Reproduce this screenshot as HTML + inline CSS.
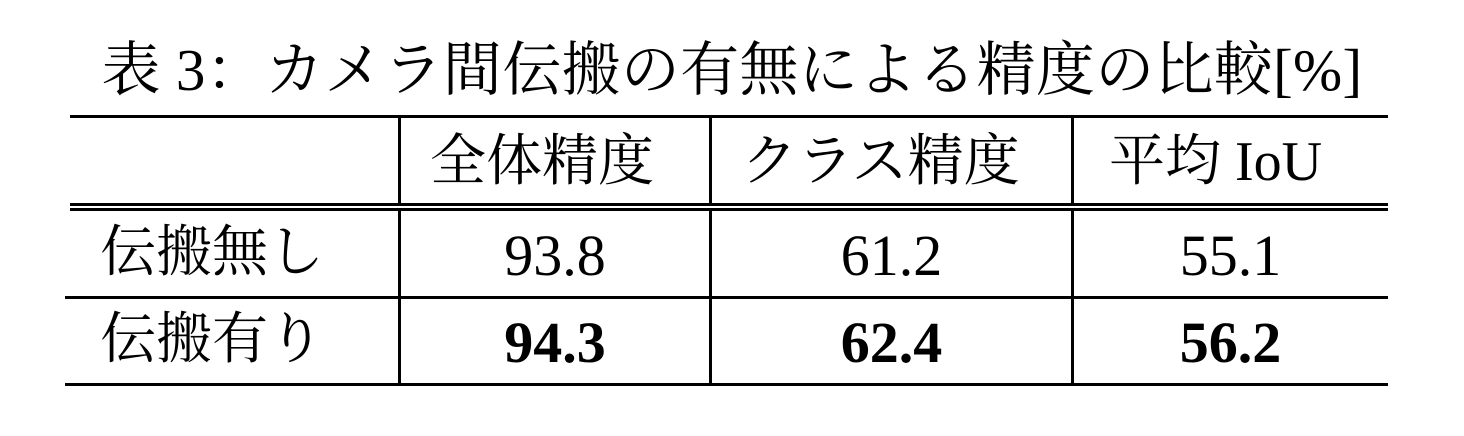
<!DOCTYPE html>
<html><head><meta charset="utf-8"><style>
body{margin:0;width:1464px;height:436px;background:#fff;position:relative;overflow:hidden;font-family:"Liberation Serif","Noto Serif CJK SC","Noto Serif CJK JP",serif;color:#000}
.h{position:absolute;background:#000;height:3px}
.v{position:absolute;background:#000;width:3px}
.t{position:absolute;font-size:56px;line-height:60px;white-space:nowrap;text-align:center}
b{font-weight:bold}
</style></head><body>
<div class="t" style="left:0;width:1464px;top:40px;font-size:59px;letter-spacing:0.3px">表 3：カメラ間伝搬の有無による精度の比較[%]</div>
<div class="h" style="left:70px;width:1318px;top:115px"></div>
<div class="h" style="left:70px;width:1318px;top:203px"></div>
<div class="h" style="left:70px;width:1318px;top:208px"></div>
<div class="h" style="left:65px;width:1323px;top:296px"></div>
<div class="h" style="left:65px;width:1323px;top:383px"></div>
<div class="v" style="left:398px;top:116px;height:89px"></div>
<div class="v" style="left:398px;top:209px;height:176px"></div>
<div class="v" style="left:709px;top:116px;height:89px"></div>
<div class="v" style="left:709px;top:209px;height:176px"></div>
<div class="v" style="left:1071px;top:116px;height:89px"></div>
<div class="v" style="left:1071px;top:209px;height:176px"></div>
<div class="t" style="left:387px;width:310px;top:132px">全体精度</div>
<div class="t" style="left:700px;width:361px;top:132px">クラス精度</div>
<div class="t" style="left:1058px;width:315px;top:132px">平均 IoU</div>
<div class="t" style="left:100px;top:223px;text-align:left">伝搬無し</div>
<div class="t" style="left:100px;top:310px;text-align:left">伝搬有り</div>
<div class="t" style="left:400px;width:310px;top:226px;font-size:58px">93.8</div>
<div class="t" style="left:711px;width:361px;top:226px;font-size:58px">61.2</div>
<div class="t" style="left:1073px;width:315px;top:226px;font-size:58px">55.1</div>
<div class="t" style="left:400px;width:310px;top:313px;font-size:58px"><b>94.3</b></div>
<div class="t" style="left:711px;width:361px;top:313px;font-size:58px"><b>62.4</b></div>
<div class="t" style="left:1073px;width:315px;top:313px;font-size:58px"><b>56.2</b></div>
</body></html>
